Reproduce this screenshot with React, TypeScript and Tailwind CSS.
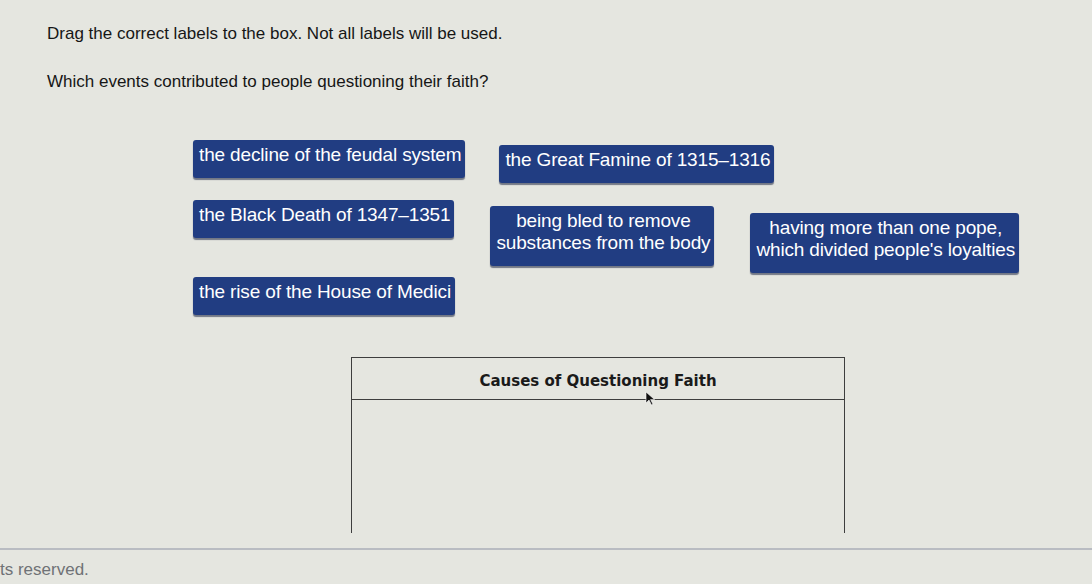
const labels = {
  decline: 'the decline of the feudal system',
  famine: 'the Great Famine of 1315–1316',
  death: 'the Black Death of 1347–1351',
  bled: ['being bled to remove', 'substances from the body'],
  pope: ['having more than one pope,', "which divided people's loyalties"],
  medici: 'the rise of the House of Medici',
};

function Label({ lines }: { lines: string | string[] }) {
  const arr = Array.isArray(lines) ? lines : [lines];
  return (
    <div className="rounded-[3px] bg-[#213d82] pl-1.5 pr-1 pt-1 pb-3 text-center text-[19px] leading-[22px] text-white shadow-[0_2px_1px_rgba(20,30,60,0.55)] [font-family:'Liberation_Sans',Arial,sans-serif] tracking-[-0.15px]">
      {arr.map((l) => (
        <div key={l} className="whitespace-nowrap">
          {l}
        </div>
      ))}
    </div>
  );
}

export default function App() {
  return (
    <div className="relative h-[584px] w-[1092px] overflow-hidden bg-[#e5e6e0] [font-family:'Liberation_Sans',Arial,sans-serif]">
      <div className="px-[47px] pt-[22px] text-[17px] leading-[24px] text-[#161616]">
        <p>Drag the correct labels to the box. Not all labels will be used.</p>
        <p className="mt-[24px]">Which events contributed to people questioning their faith?</p>
      </div>

      <div className="ml-[193px] mt-[46px] flex flex-col">
        <div className="flex items-start gap-[34px]">
          <Label lines={labels.decline} />
          <div className="mt-[5px]">
            <Label lines={labels.famine} />
          </div>
        </div>
        <div className="mt-[17px] flex items-start gap-[36px]">
          <Label lines={labels.death} />
          <div className="mt-[6px]">
            <Label lines={labels.bled} />
          </div>
          <div className="mt-[13px]">
            <Label lines={labels.pope} />
          </div>
        </div>
        <div className="mt-[4px] flex">
          <Label lines={labels.medici} />
        </div>
      </div>

      <div className="ml-[351px] mt-[42px] w-[494px] border border-b-0 border-[#3e3e3e]">
        <div className="relative flex h-[42px] items-center justify-center border-b border-[#3e3e3e] pt-1.5 text-[15px] font-bold text-[#1a1a1a] [font-family:'DejaVu_Sans',Verdana,sans-serif]">
          Causes of Questioning Faith
          <svg className="absolute left-[293px] top-[33px]" width="12" height="16" viewBox="0 0 12 16">
            <path d="M1 1 L1 12 L4 9 L6.5 14 L8 13.3 L5.6 8.5 L9.5 8.5 Z" fill="#111" stroke="#fff" strokeWidth="0.6" />
          </svg>
        </div>
        <div className="h-[133px]" />
      </div>

      <div className="absolute bottom-[34px] left-0 right-0 h-[2px] bg-[#b9bcc2]" />
      <div className="absolute bottom-[2px] left-0 text-[17px] text-[#6f7276] [font-family:'Liberation_Sans',Arial,sans-serif]">
        ts reserved.
      </div>
    </div>
  );
}
